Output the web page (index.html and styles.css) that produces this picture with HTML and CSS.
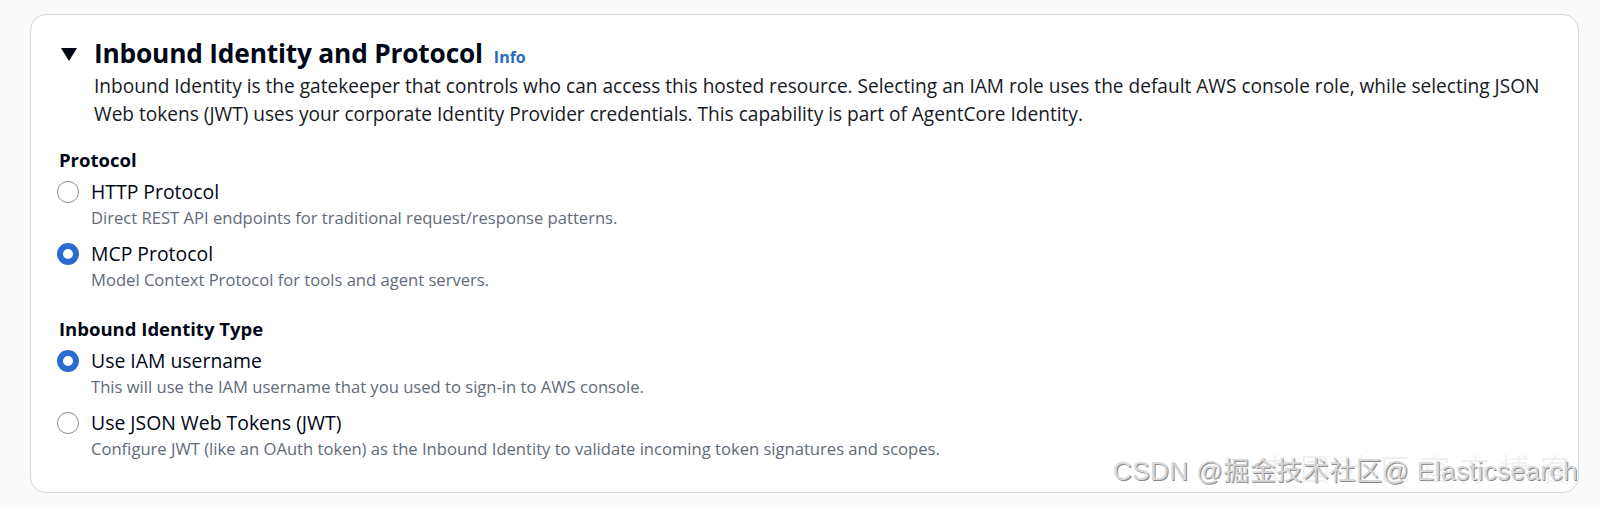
FILE: index.html
```html
<!DOCTYPE html>
<html lang="en">
<head>
<meta charset="utf-8">
<title>Inbound Identity and Protocol</title>
<link rel="stylesheet" href="styles.css">
</head>
<body>
<div class="page">
  <section class="card">
    <header class="card-header">
      <div class="title-row">
        <span class="caret" aria-hidden="true"></span>
        <h2 class="title">Inbound Identity and Protocol</h2>
        <a class="info" href="#">Info</a>
      </div>
      <p class="lead">Inbound Identity is the gatekeeper that controls who can access this hosted resource. Selecting an IAM role uses the default AWS console role, while selecting JSON Web tokens (JWT) uses your corporate Identity Provider credentials. This capability is part of AgentCore Identity.</p>
    </header>

    <div class="field">
      <div class="field-label">Protocol</div>
      <div class="radio-group">
        <label class="radio">
          <span class="dot"></span>
          <span class="radio-text">
            <span class="radio-label">HTTP Protocol</span>
            <span class="radio-desc">Direct REST API endpoints for traditional request/response patterns.</span>
          </span>
        </label>
        <label class="radio">
          <span class="dot checked"></span>
          <span class="radio-text">
            <span class="radio-label">MCP Protocol</span>
            <span class="radio-desc">Model Context Protocol for tools and agent servers.</span>
          </span>
        </label>
      </div>
    </div>

    <div class="field">
      <div class="field-label">Inbound Identity Type</div>
      <div class="radio-group">
        <label class="radio">
          <span class="dot checked"></span>
          <span class="radio-text">
            <span class="radio-label">Use IAM username</span>
            <span class="radio-desc">This will use the IAM username that you used to sign-in to AWS console.</span>
          </span>
        </label>
        <label class="radio">
          <span class="dot"></span>
          <span class="radio-text">
            <span class="radio-label">Use JSON Web Tokens (JWT)</span>
            <span class="radio-desc">Configure JWT (like an OAuth token) as the Inbound Identity to validate incoming token signatures and scopes.</span>
          </span>
        </label>
      </div>
    </div>
  </section>
  <div class="watermark">CSDN @掘金技术社区@ Elasticsearch</div>
  <div class="watermark faint">中国社区官方博客</div>
</div>
</body>
</html>
```

FILE: styles.css
```css
* { box-sizing: border-box; }

html, body {
  margin: 0;
  padding: 0;
  background: #fafafa;
}

body {
  font-family: "Open Sans", "Noto Sans", "Noto Sans CJK SC", sans-serif;
  color: #000716;
}

.page {
  position: relative;
  width: 1600px;
  height: 505px;
  padding: 14px 21px 0 30px;
}

.card {
  background: #ffffff;
  border: 1px solid #d5d8dc;
  border-radius: 16px;
  height: 479px;
  padding: 21px 32px 0 26px;
}

.card-header {
  margin-bottom: 20px;
}

.title-row {
  display: flex;
  align-items: baseline;
}

.caret {
  display: inline-block;
  width: 0;
  height: 0;
  border-left: 8px solid transparent;
  border-right: 8px solid transparent;
  border-top: 13px solid #000716;
  margin: 0 17px 0 4px;
  align-self: center;
  position: relative;
  top: 1px;
}

.title {
  margin: 0;
  font-size: 26.3px;
  line-height: 34px;
  font-weight: 700;
  letter-spacing: -0.2px;
}

.info {
  margin-left: 11px;
  font-size: 16px;
  font-weight: 700;
  color: #2a6bbf;
  text-decoration: none;
}

.lead {
  margin: 2px 0 0 37px;
  font-size: 19.1px;
  line-height: 28px;
  color: #16191f;
}

.field {
  margin-bottom: 25px;
}

.field-label {
  font-size: 18.5px;
  line-height: 24px;
  font-weight: 700;
  margin-left: 2px;
  margin-bottom: 7px;
}

.radio-group {
  display: flex;
  flex-direction: column;
  gap: 11px;
}

.radio {
  display: flex;
  align-items: flex-start;
  gap: 12px;
}

.dot {
  flex: none;
  width: 22px;
  height: 22px;
  margin-top: 2px;
  border-radius: 50%;
  border: 1.5px solid #8c8c94;
  background: #fff;
}

.dot.checked {
  border: 6.5px solid #2a6bd0;
  background: #fff;
}

.radio-text {
  display: flex;
  flex-direction: column;
}

.radio-label {
  font-size: 19.4px;
  line-height: 26px;
  color: #000716;
}

.radio-desc {
  margin-top: 1px;
  font-size: 16.6px;
  line-height: 24px;
  color: #5f6b7a;
}

.watermark {
  position: absolute;
  right: 22px;
  bottom: 18px;
  font-family: "Liberation Sans", "Noto Sans CJK SC", sans-serif;
  font-size: 26px;
  color: #d8d8d8;
  text-shadow: 1px 1px 0 #8a8a8a, -1px -1px 0 #fff;
  letter-spacing: 0.5px;
}

.watermark.faint {
  right: 20px;
  bottom: 16px;
  font-size: 30px;
  letter-spacing: 10px;
  color: rgba(200, 200, 200, 0.25);
  text-shadow: none;
}
```
